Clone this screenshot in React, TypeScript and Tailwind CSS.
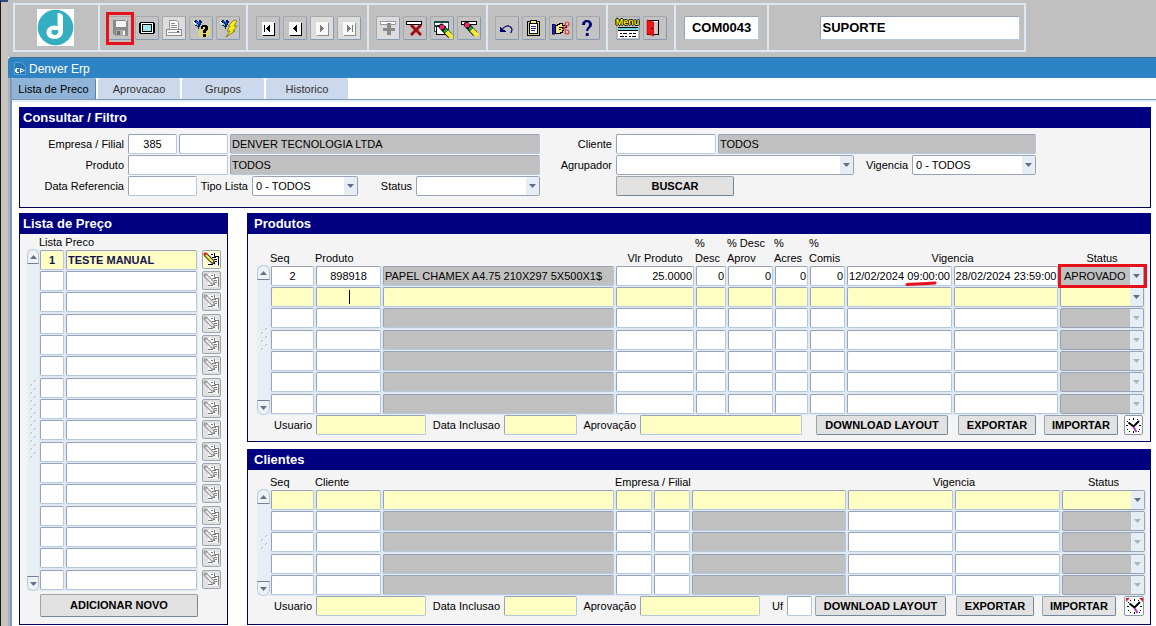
import { useState } from 'react';
import type { ReactNode } from 'react';
import clsx from 'clsx';

type Tone = 'white' | 'yellow' | 'gray';

const tones: Record<Tone, string> = {
  white: 'bg-white',
  yellow: 'bg-[#ffffc4]',
  gray: 'bg-[#c0c0c0]',
};

const fieldBorder =
  'border border-t-[#98a4b6] border-l-[#98a4b6] border-r-[#b4c8e0] border-b-[#b4c8e0] rounded-xs';

/* ---------- form controls ---------- */

function Field({
  id,
  label,
  value = '',
  tone = 'white',
  className = '',
}: {
  id?: string;
  label?: string;
  value?: string;
  tone?: Tone;
  className?: string;
}) {
  return (
    <input
      id={id}
      aria-label={label}
      defaultValue={value}
      readOnly={tone === 'gray'}
      className={clsx('block h-5 min-w-0 px-px outline-none', fieldBorder, tones[tone], className)}
    />
  );
}

function Arrow({ disabled = false }: { disabled?: boolean }) {
  return (
    <span className="pointer-events-none absolute inset-y-px right-px flex w-[13px] items-center justify-center bg-[#e6edf5]">
      <svg width="7" height="4" viewBox="0 0 7 4">
        <path d="M0 0h7L3.5 4z" fill={disabled ? '#a9b1bc' : '#5f6e86'} />
      </svg>
    </span>
  );
}

function Select({
  id,
  label,
  value = '',
  tone = 'white',
  disabled = false,
  className = '',
}: {
  id?: string;
  label?: string;
  value?: string;
  tone?: Tone;
  disabled?: boolean;
  className?: string;
}) {
  return (
    <div className={clsx('relative h-5 min-w-0', className)}>
      <select
        id={id}
        aria-label={label}
        disabled={disabled}
        defaultValue={value}
        className={clsx(
          'block h-full w-full appearance-none border border-[#98a4b6] rounded-xs pl-[3px] text-black opacity-100 outline-none',
          tones[tone],
        )}
      >
        <option value={value}>{value}</option>
      </select>
      <Arrow disabled={disabled} />
    </div>
  );
}

function Label({ htmlFor, className, children }: { htmlFor: string; className: string; children: ReactNode }) {
  return (
    <label htmlFor={htmlFor} className={clsx('shrink-0 pr-1 text-right whitespace-nowrap', className)}>
      {children}
    </label>
  );
}

function ActionButton({ className = '', children }: { className?: string; children: ReactNode }) {
  return (
    <button
      type="button"
      className={clsx(
        'shrink-0 rounded-xs border border-[#9aa5b0] border-r-[#71889c] border-b-[#71889c] bg-[#e1e1e1] font-bold whitespace-nowrap',
        className,
      )}
    >
      {children}
    </button>
  );
}

function Panel({ title, indent = 'pl-[3px]', children }: { title: string; indent?: string; children: ReactNode }) {
  return (
    <section className="border border-t-0 border-[#00005c] bg-[#f4f4f4]">
      <h2 className={clsx('-mx-px h-[21px] bg-[#000080] text-[13px] leading-[22px] font-bold text-white', indent)}>
        {title}
      </h2>
      {children}
    </section>
  );
}

/* ---------- record scroller ---------- */

function Scroller({ grips, className }: { grips: number; className: string }) {
  return (
    <div className={clsx('flex shrink-0 flex-col bg-[#e8eef5]', className)}>
      <button
        type="button"
        aria-label="Registro anterior"
        className="flex h-[15px] items-center justify-center rounded-t-full border border-[#b9c9dc] border-b-[#70809a] bg-[#eef2f7]"
      >
        <svg width="7" height="4" viewBox="0 0 7 4">
          <path d="M0 4h7L3.5 0z" fill="#6b6f86" />
        </svg>
      </button>
      <div className="flex flex-1 flex-col items-center justify-center">
        {Array.from({ length: grips }, (_, i) => (
          <svg key={i} width="8" height="8" viewBox="0 0 8 8">
            <path d="M5 2l2-2M1 6l2-2" stroke="#a5b1c2" />
            <path d="M6 3l2-2M2 7l2-2" stroke="#fff" />
          </svg>
        ))}
      </div>
      <button
        type="button"
        aria-label="Proximo registro"
        className="flex h-[15px] items-center justify-center rounded-b-full border border-[#b9c9dc] border-t-[#70809a] bg-[#eef2f7]"
      >
        <svg width="7" height="4" viewBox="0 0 7 4">
          <path d="M0 0h7L3.5 4z" fill="#6b6f86" />
        </svg>
      </button>
    </div>
  );
}

/* ---------- icons ---------- */

function Logo() {
  return (
    <svg width="37" height="37" viewBox="0 0 37 37" role="img" aria-label="Denver">
      <path fill="#fff" d="M0 0h37v37H0z" />
      <circle cx="18.5" cy="18.5" r="17.8" fill="#33afc1" />
      <path
        fill="#fff"
        d="M20.500 4c3 0 5.500 1.400 5.500 4v14.500c0 4.500-3.600 7.500-8.200 7.500S9.500 27.500 9.500 23.800c0-4.400 3.500-7.300 7.500-7.300 1.400 0 2.600.4 3.500 1z"
      />
      <path fill="#33afc1" d="M17.600 19.800c2.200 0 3.700 1.300 3.700 3s-1.500 3.200-3.700 3.200c-1.900 0-3.200-1.200-3.200-2.900 0-1.900 1.300-3.300 3.200-3.300z" />
      <path fill="#fff" d="M14.500 19.500l4-2.500 2.500 3.500-4 .7z" />
    </svg>
  );
}

function Pix({ children }: { children: ReactNode }) {
  return (
    <svg width="22" height="22" viewBox="0 0 22 22" shapeRendering="crispEdges" aria-hidden="true">
      {children}
    </svg>
  );
}

const SaveIcon = (
  <Pix>
    <path fill="#8a8a8a" d="M4 3h15v16H6l-2-2z" />
    <path fill="#f4f4f4" d="M7 4h10v6H7z" />
    <path fill="#a9a9a9" d="M7 13h9v6H7z" />
    <path fill="#6e6e6e" d="M8 14h3v4H8z" />
    <path fill="#fff" d="M17 3h1v1h-1zM14 14h2v4h-2z" />
  </Pix>
);

const ScreenIcon = (
  <Pix>
    <path d="M4 5h14v1h1v10h-1v1H4v-1H3V6h1z" />
    <path fill="#fff" d="M5 6h12v10H5z" />
    <path d="M6 7h10v8H6z" />
    <path fill="#8fe9ee" d="M7 8h8v6H7z" />
    <path fill="#fff" d="M7 8h1v1H7zM9 8h1v1H9zM11 8h1v1h-1zM8 10h1v1H8zM10 11h1v1h-1zM12 12h1v1h-1z" />
  </Pix>
);

const PrintIcon = (
  <Pix>
    <path fill="#fff" stroke="#999" d="M6.500 3.500h7l2 2v7h-9z" />
    <path stroke="#888" d="M8 6.500h4M8 8.500h6M8 10.500h6" />
    <path fill="#f7f7f7" stroke="#8d8d8d" d="M3.500 12.500h15v6h-15z" />
    <path stroke="#999" d="M5 15.500h12" />
    <path stroke="#555" d="M14 14.500h2" />
  </Pix>
);

function Torch() {
  return (
    <>
      <path fill="#10204a" d="M3 4h2V3h2v1h2V3h2v1h1v2h-1v2h-1v2H9v2H8v-2H7V9H5V7H4V6H3z" />
      <path fill="#fff" d="M3 4h1v1h1v1h1v2H5V7H4V6H3z" />
      <path fill="#1c41d6" d="M6 4h2v1h2v2H8V6H6z" />
      <path fill="#35d0e0" d="M6 6h1v1h1v2H7V8H6zM8 4h1v1H8z" />
    </>
  );
}

const FindIcon = (
  <Pix>
    <path fill="#e3dc5c" d="M11 9h9v9h-2v2H9v-7h2z" />
    <path fill="#c3c3c3" d="M12 17h1v1h-1zM18 15h1v1h-1zM10 15h1v1h-1zM18 9h1v1h-1zM16 18h1v1h-1zM10 18h1v1h-1zM19 12h1v1h-1z" />
    <Torch />
    <path d="M11 9h1V8h5v1h1v4h-1v1h-1v2h-3v-3h1v-1h1v-2h-2v2h-2zM13 17h3v3h-3z" />
  </Pix>
);

const RunIcon = (
  <Pix>
    <path
      fill="#f7ea16"
      stroke="#6e6400"
      strokeWidth="0.700"
      d="M17 3l3 1-3 5h3l-4 5h2l-9 6 4-6h-3l3-5h-2z"
      shapeRendering="auto"
    />
    <Torch />
  </Pix>
);

function NavIcon({ dir, bar = false, off = false }: { dir: 'prev' | 'next'; bar?: boolean; off?: boolean }) {
  const ink = off ? '#7d7d7d' : '#000';
  return (
    <Pix>
      <path fill={off ? '#8d8d8d' : '#000'} d="M6 6h12v13H6z" />
      <path fill="#f8f8f8" d="M5 5h12v13H5z" />
      {dir === 'prev' ? <path fill={ink} d="M9 11h1v-1h1V9h1V8h1v7h-1v-1h-1v-1h-1v-1H9z" /> : null}
      {dir === 'next' ? <path fill={ink} d="M9 8h1v1h1v1h1v1h1v1h-1v1h-1v1h-1v1H9z" /> : null}
      {bar && dir === 'prev' ? <path fill={ink} d="M7 8h1v7H7z" /> : null}
      {bar && dir === 'next' ? <path fill={ink} d="M14 8h1v7h-1z" /> : null}
    </Pix>
  );
}

const AddIcon = (
  <Pix>
    <path fill="#fff" stroke="#999" d="M3.500 4.500h15v3h-15z" />
    <path fill="#8a8a8a" d="M10 6h4v5h4v3h-4v4h-4v-4H6v-3h4z" />
  </Pix>
);

const RemoveIcon = (
  <Pix>
    <path fill="#fff" stroke="#000" d="M2.500 4.500h15v3h-15z" />
    <path stroke="#a01010" strokeWidth="3" d="M7 8l10 10M17 8L7 18" shapeRendering="auto" />
  </Pix>
);

function Eraser() {
  return (
    <g shapeRendering="auto">
      <path stroke="#000" strokeWidth="5.500" strokeLinecap="round" d="M8.500 7.500l8 8.500" />
      <path stroke="#f2ea30" strokeWidth="4.500" d="M13.500 12.500l6 6.500" />
      <path stroke="#1f9d45" strokeWidth="4" d="M11.500 10.500l2 2" />
      <circle cx="9" cy="8" r="2.500" fill="#e8286a" />
    </g>
  );
}

const ClearFormIcon = (
  <Pix>
    <path fill="#fff" stroke="#1a4b4b" d="M3.500 4.500h14v10h-14z" />
    <path fill="#1a4b4b" d="M3 4h15v2H3zM3 8h8v2H3z" />
    <path fill="#fff" stroke="#000" d="M5.500 9.500h9v8h-9z" />
    <g transform="translate(2 2)">
      <Eraser />
    </g>
  </Pix>
);

const ClearRowIcon = (
  <Pix>
    <path fill="#fff" stroke="#000" d="M3.500 4.500h15v3h-15z" />
    <Eraser />
  </Pix>
);

const UndoIcon = (
  <Pix>
    <path fill="none" stroke="#00006c" strokeWidth="1.200" d="M6 13c2-4 6-5 8.500-3 2 1.500 2 4 0 6" shapeRendering="auto" />
    <path fill="#00006c" d="M4 10h1v1h1v1h1v1h2v1h1v1H4z" />
  </Pix>
);

const ClipboardIcon = (
  <Pix>
    <path fill="#d3cd84" stroke="#000" d="M4.500 4.500h12v14h-12z" />
    <path fill="#fff" stroke="#000" d="M6.500 6.500h8v10h-8z" />
    <path fill="#f3ea6a" stroke="#000" d="M7.500 3.500h6v3h-6z" />
    <path stroke="#222c80" d="M8 9.500h5M8 11.500h5M8 13.500h4" />
  </Pix>
);

const CutIcon = (
  <Pix>
    <path fill="#1818c8" stroke="#000" strokeWidth="0.500" d="M2 7h3v10H2z" />
    <path fill="#f4eb74" stroke="#000" d="M5.500 8.500h2v-1h2v-1h3v2h4v2h-4v1h1v2h-1v2h-2v1h-5z" />
    <path stroke="#000" d="M9 10.500h3M9 12.500h2" />
    <g fill="none" stroke="#e23a3a" strokeWidth="1.200" shapeRendering="auto">
      <circle cx="17" cy="7" r="2" />
      <circle cx="17" cy="15" r="2" />
      <path d="M13 13l3-4M13 9l3 4" />
    </g>
  </Pix>
);

const HelpIcon = (
  <Pix>
    <path
      fill="#00007a"
      shapeRendering="auto"
      d="M5 8c0-3 2-5 5-5s5 1.800 5 4.500c0 3-3.500 3.800-3.800 6.500h-2c0-3.500 2.800-4 2.800-6.500C12 6 11 5 10 5S8 6 8 8zM8.800 16h2.800v3H8.800z"
    />
  </Pix>
);

const ExitIcon = (
  <Pix>
    <path fill="#fff" stroke="#000" d="M3.500 3.500h11v14h-11z" />
    <path fill="#c9c9c9" d="M11 5h3v12h-3z" />
    <path fill="#f01414" stroke="#8b0000" strokeWidth="0.500" d="M3 3l7 2v14l-7-2z" shapeRendering="auto" />
    <path d="M7 11h2v1H7z" />
  </Pix>
);

function MenuIcon() {
  return (
    <span className="flex shrink-0 flex-col items-center" aria-hidden="true">
      <span className="h-[10px] text-[9px] leading-[10px] font-bold text-[#fff200] [text-shadow:1px_0_#000,-1px_0_#000,0_1px_#000,0_-1px_#000]">
        Menu
      </span>
      <svg width="20" height="11" viewBox="0 0 20 11" shapeRendering="crispEdges" className="shrink-0">
        <path fill="#fff" d="M0 0h20v11H0z" />
        <path fill="#000" d="M0 0h20v1H0zM0 3h20v1H0z" />
        <path fill="#6fd3dc" d="M0 1h20v2H0z" />
        <path fill="#000" d="M2 6h2v1H2zM5 6h4v1H5zM11 6h3v1h-3zM15 6h3v1h-3zM2 9h4v1H2zM7 9h2v1H7zM11 9h2v1h-2zM14 9h4v1h-4z" />
      </svg>
    </span>
  );
}

function NoteIcon({ active }: { active: boolean }) {
  const ink = active ? '#000' : '#7b7b7b';
  return (
    <svg width="17" height="17" viewBox="0 0 17 17" className="shrink-0" aria-hidden="true">
      <path fill="#fff" d="M5 2h7l3 3v10H5z" />
      <path stroke={ink} fill="none" d="M11.500 2v3.500H15M15.500 5v9.500M8 3.500h2M9 6.500h4M11 8.500h3M12 10.500h2M5 13.500h5" />
      <path stroke={ink} strokeWidth="4" d="M2 3l8.500 8.500" />
      <path stroke={active ? '#f0e04a' : '#e6e6e6'} strokeWidth="2.500" d="M2 3l8 8" />
      <path stroke={active ? '#e02020' : '#a0a0a0'} strokeWidth="3" d="M1 2l2 2" />
      <path fill={ink} d="M12.500 13.500l-3-1 2-2z" />
    </svg>
  );
}

function ClockButton({ marked = false, className }: { marked?: boolean; className: string }) {
  return (
    <button
      type="button"
      aria-label="Historico de alteracoes"
      className={clsx('flex h-5 shrink-0 items-center justify-center rounded-xs border border-[#8a97a6] bg-white', className)}
    >
      <svg width="17" height="17" viewBox="0 0 17 17" className="shrink-0" aria-hidden="true">
        {marked && <path fill="#c8202c" d="M0 0h4L0 4zM17 0h-4l4 4z" />}
        <path
          fill="#000"
          shapeRendering="crispEdges"
          d="M8 1h1v2H8zM8 14h1v2H8zM1 8h2v1H1zM14 8h2v1h-2zM4 2h1v1H4zM12 2h1v1h-1zM2 4h1v1H2zM2 12h1v1H2zM14 12h1v1h-1zM4 14h1v1H4zM13 14h1v1h-1z"
        />
        <path fill="none" stroke="#000" strokeWidth="2" d="M3.500 5.500L8.500 9.500 14 4" />
        <path stroke="#b03ac0" strokeWidth="2" d="M8.500 10l3 5" />
      </svg>
    </button>
  );
}

/* ---------- toolbar ---------- */

function Tool({
  label,
  off = false,
  highlight = false,
  children,
}: {
  label: string;
  off?: boolean;
  highlight?: boolean;
  children: ReactNode;
}) {
  return (
    <button
      type="button"
      aria-label={label}
      className={clsx(
        'relative flex size-6 items-center justify-center rounded-xs border border-t-[#a8a8a8] border-l-[#a8a8a8] border-r-[#8399b4] border-b-[#8399b4]',
        off ? 'bg-[#dcdcdc]' : 'bg-[#c3c3c3]',
      )}
    >
      {children}
      {highlight && <span className="absolute -inset-x-[3px] -top-[5px] -bottom-[6px] border-3 border-[#e8101a]" />}
    </button>
  );
}

function ToolGroup({ className, children }: { className: string; children: ReactNode }) {
  return (
    <div className={clsx('flex items-center justify-center gap-[3px] border-r-2 border-[#dde6f3]', className)}>
      {children}
    </div>
  );
}

function Toolbar() {
  return (
    <header className="h-[57px] bg-[#c0c0c0] pt-[3px] pl-[5px]">
      <div className="flex h-[49px] w-fit border-2 border-r-0 border-[#dde6f3]">
        <ToolGroup className="w-[85px] pr-0.5">
          <Logo />
        </ToolGroup>
        <ToolGroup className="w-[148px] pl-0.5">
          <Tool label="Salvar" highlight>{SaveIcon}</Tool>
          <Tool label="Tela">{ScreenIcon}</Tool>
          <Tool label="Imprimir" off>{PrintIcon}</Tool>
          <Tool label="Entrar consulta">{FindIcon}</Tool>
          <Tool label="Executar consulta">{RunIcon}</Tool>
        </ToolGroup>
        <ToolGroup className="w-[121px] pl-0.5">
          <Tool label="Primeiro"><NavIcon dir="prev" bar /></Tool>
          <Tool label="Anterior"><NavIcon dir="prev" /></Tool>
          <Tool label="Proximo" off><NavIcon dir="next" off /></Tool>
          <Tool label="Ultimo" off><NavIcon dir="next" bar off /></Tool>
        </ToolGroup>
        <ToolGroup className="w-[119px] pl-0.5">
          <Tool label="Inserir" off>{AddIcon}</Tool>
          <Tool label="Excluir">{RemoveIcon}</Tool>
          <Tool label="Limpar tela">{ClearFormIcon}</Tool>
          <Tool label="Limpar registro">{ClearRowIcon}</Tool>
        </ToolGroup>
        <ToolGroup className="w-[120px]">
          <Tool label="Desfazer">{UndoIcon}</Tool>
          <Tool label="Colar">{ClipboardIcon}</Tool>
          <Tool label="Recortar">{CutIcon}</Tool>
          <Tool label="Ajuda">{HelpIcon}</Tool>
        </ToolGroup>
        <ToolGroup className="w-[68px]">
          <Tool label="Menu"><MenuIcon /></Tool>
          <Tool label="Sair">{ExitIcon}</Tool>
        </ToolGroup>
        <ToolGroup className="w-[93px]">
          <input
            aria-label="Codigo do programa"
            defaultValue="COM0043"
            className={clsx('h-6 w-[75px] bg-white text-center text-[13px] font-bold outline-none', fieldBorder)}
          />
        </ToolGroup>
        <ToolGroup className="w-[257px] pl-[46px]">
          <input
            aria-label="Usuario logado"
            defaultValue="SUPORTE"
            className={clsx('h-6 w-[200px] bg-white px-0.5 text-[13px] font-bold outline-none', fieldBorder)}
          />
        </ToolGroup>
      </div>
    </header>
  );
}

/* ---------- tabs ---------- */

const tabs = ['Lista de Preco', 'Aprovacao', 'Grupos', 'Historico'];

function Tabs() {
  const [current, setCurrent] = useState(tabs[0]);
  return (
    <nav className="border-b-2 border-[#e3eefb] bg-white">
      <div role="tablist" className="flex h-[22px] gap-0.5 border-b border-[#7d97b5]">
        {tabs.map((tab) => (
          <button
            key={tab}
            type="button"
            role="tab"
            aria-selected={tab === current}
            onClick={() => setCurrent(tab)}
            className={clsx(
              'rounded-t-xs leading-4',
              tab === current ? 'w-[84px] border-r border-[#5f83a8] bg-[#8fb4d7]' : 'w-[82px] bg-[#ccd8eb] text-[#333]',
            )}
          >
            {tab}
          </button>
        ))}
      </div>
    </nav>
  );
}

/* ---------- filter ---------- */

function FilterPanel() {
  return (
    <Panel title="Consultar / Filtro" indent="pl-1">
      <form className="grid grid-cols-[520fr_496fr] pt-[6px] pr-[114px] pb-[11px]" onSubmit={(e) => e.preventDefault()}>
        <div className="flex flex-col gap-px">
          <div className="flex items-center">
            <Label htmlFor="empresa" className="w-[108px]">Empresa / Filial</Label>
            <Field id="empresa" value="385" className="mr-0.5 w-[49px] text-center" />
            <Field label="Filial" className="mr-0.5 w-[49px]" />
            <Field label="Nome da empresa" value="DENVER TECNOLOGIA LTDA" tone="gray" className="flex-1" />
          </div>
          <div className="flex items-center">
            <Label htmlFor="produto" className="w-[108px]">Produto</Label>
            <Field id="produto" className="mr-0.5 w-[100px]" />
            <Field label="Nome do produto" value="TODOS" tone="gray" className="flex-1" />
          </div>
          <div className="flex items-center">
            <Label htmlFor="data-ref" className="w-[108px]">Data Referencia</Label>
            <Field id="data-ref" className="w-[69px]" />
            <Label htmlFor="tipo-lista" className="w-[55px]">Tipo Lista</Label>
            <Select id="tipo-lista" value="0 - TODOS" className="w-[106px]" />
            <Label htmlFor="status" className="w-[58px]">Status</Label>
            <Select id="status" className="flex-1" />
          </div>
        </div>
        <div className="flex flex-col gap-px">
          <div className="flex items-center">
            <Label htmlFor="cliente" className="w-[76px]">Cliente</Label>
            <Field id="cliente" className="mr-0.5 w-[100px]" />
            <Field label="Nome do cliente" value="TODOS" tone="gray" className="flex-1" />
          </div>
          <div className="flex items-center">
            <Label htmlFor="agrupador" className="w-[76px]">Agrupador</Label>
            <Select id="agrupador" className="flex-1" />
            <Label htmlFor="vigencia" className="w-[58px]">Vigencia</Label>
            <Select id="vigencia" value="0 - TODOS" className="w-[124px]" />
          </div>
          <div className="flex pl-[76px]">
            <ActionButton className="h-5 w-[118px]">BUSCAR</ActionButton>
          </div>
        </div>
      </form>
    </Panel>
  );
}

/* ---------- price lists ---------- */

const priceLists = [{ id: '1', name: 'TESTE MANUAL' }, ...Array.from({ length: 15 }, () => ({ id: '', name: '' }))];

const rowClass = 'h-[21px] nth-[3n]:h-[22px]';
const cellClass = 'bg-[#dfe8f3] p-0 px-px align-top';

function PriceListPanel() {
  return (
    <Panel title="Lista de Preço" indent="pl-1">
      <div className="flex pr-[5px] pl-[7px]">
        <Scroller grips={10} className="mt-[15px] w-3" />
        <table className="w-full table-fixed border-separate border-spacing-0">
          <colgroup>
            <col className="w-[26px]" />
            <col />
            <col className="w-[24px]" />
          </colgroup>
          <thead>
            <tr className="h-4">
              <th colSpan={3} className="p-0 text-left leading-4 font-normal">Lista Preco</th>
            </tr>
          </thead>
          <tbody>
            {priceLists.map((list, i) => {
              const active = i === 0;
              return (
                <tr key={i} className={rowClass}>
                  <td className={cellClass}>
                    <Field
                      label={`Codigo ${i + 1}`}
                      value={list.id}
                      tone={active ? 'yellow' : 'white'}
                      className="w-full text-center font-bold text-[#14144a]"
                    />
                  </td>
                  <td className={cellClass}>
                    <Field
                      label={`Lista ${i + 1}`}
                      value={list.name}
                      tone={active ? 'yellow' : 'white'}
                      className="w-full font-bold text-[#14144a]"
                    />
                  </td>
                  <td className="p-0 pl-1 align-top">
                    <button
                      type="button"
                      aria-label={`Editar lista ${i + 1}`}
                      className={clsx(
                        'flex size-[19px] items-center justify-center rounded-xs border border-[#9aa6b4]',
                        active ? 'bg-[#ffffd0]' : 'bg-[#e1e1e1]',
                      )}
                    >
                      <NoteIcon active={active} />
                    </button>
                  </td>
                </tr>
              );
            })}
          </tbody>
        </table>
      </div>
      <div className="flex pt-[3px] pr-[29px] pb-[7px] pl-5">
        <ActionButton className="h-[23px] flex-1">ADICIONAR NOVO</ActionButton>
      </div>
    </Panel>
  );
}

/* ---------- products ---------- */

const product = [
  '2',
  '898918',
  'PAPEL CHAMEX A4.75 210X297 5X500X1$',
  '25.0000',
  '0',
  '0',
  '0',
  '0',
  '12/02/2024 09:00:00',
  '28/02/2024 23:59:00',
];

const productRows: string[][] = [product, ...Array.from({ length: 6 }, () => product.map(() => ''))];

const productFields = [
  'Seq',
  'Produto',
  'Descricao',
  'Vlr Produto',
  '% Desc',
  '% Desc Aprov',
  '% Acres',
  '% Comis',
  'Vigencia inicial',
  'Vigencia final',
];

const thClass = 'p-0 font-normal whitespace-nowrap align-bottom leading-[15px]';

function ProductsPanel() {
  return (
    <Panel title="Produtos" indent="pl-[7px]">
      <div className="flex pr-[5px] pl-[9px]">
        <Scroller grips={3} className="mt-[31px] w-[13px]" />
        <table className="w-full table-fixed border-separate border-spacing-0">
          <colgroup>
            <col className="w-[45px]" />
            <col className="w-[67px]" />
            <col />
            <col className="w-[80px]" />
            <col className="w-[32px]" />
            <col className="w-[47px]" />
            <col className="w-[35px]" />
            <col className="w-[37px]" />
            <col className="w-[107px]" />
            <col className="w-[106px]" />
            <col className="w-[86px]" />
          </colgroup>
          <thead>
            <tr className="h-8">
              <th className={clsx(thClass, 'text-left')}>Seq</th>
              <th colSpan={2} className={clsx(thClass, 'text-left')}>Produto</th>
              <th className={thClass}>Vlr Produto</th>
              <th className={clsx(thClass, 'text-left')}>%<br />Desc</th>
              <th className={clsx(thClass, 'text-left')}>% Desc<br />Aprov</th>
              <th className={clsx(thClass, 'text-left')}>%<br />Acres</th>
              <th className={clsx(thClass, 'text-left')}>%<br />Comis</th>
              <th colSpan={2} className={thClass}>Vigencia</th>
              <th className={thClass}>Status</th>
            </tr>
          </thead>
          <tbody>
            {productRows.map((row, r) => {
              const current = r === 1;
              return (
                <tr key={r} className={rowClass}>
                  {row.map((value, c) => {
                    const tone: Tone = current ? 'yellow' : c === 2 ? 'gray' : 'white';
                    return (
                      <td key={c} className={clsx(cellClass, 'relative')}>
                        <Field
                          label={`${productFields[c]} ${r + 1}`}
                          value={value}
                          tone={tone}
                          className={clsx(
                            'w-full',
                            c < 2 && 'text-center',
                            c > 2 && c < 8 && 'text-right',
                            c >= 8 && 'px-0! text-center',
                          )}
                        />
                        {current && c === 1 && <span className="absolute top-[3px] left-1/2 h-[14px] w-px bg-black" />}
                        {r === 0 && c === 8 && (
                          <svg className="absolute top-[15px] left-[59px]" width="32" height="5" viewBox="0 0 32 5">
                            <path d="M2 3.500C10 3 20 3 30 2" fill="none" stroke="#e8101a" strokeWidth="3" strokeLinecap="round" />
                          </svg>
                        )}
                      </td>
                    );
                  })}
                  <td className={clsx(cellClass, 'relative')}>
                    <Select
                      label={`Status ${r + 1}`}
                      value={r === 0 ? 'APROVADO' : ''}
                      tone={current ? 'yellow' : 'gray'}
                      disabled={r > 1}
                    />
                    {r === 0 && (
                      <span className="pointer-events-none absolute -right-0.5 -bottom-px -left-px -top-0.5 z-10 border-3 border-[#e8101a]" />
                    )}
                  </td>
                </tr>
              );
            })}
          </tbody>
        </table>
      </div>
      <div className="flex items-center pr-[7px] pb-[6px]">
        <Label htmlFor="prod-usuario" className="w-[68px]">Usuario</Label>
        <Field id="prod-usuario" tone="yellow" className="w-[110px]" />
        <Label htmlFor="prod-inclusao" className="w-[78px]">Data Inclusao</Label>
        <Field id="prod-inclusao" tone="yellow" className="w-[73px]" />
        <Label htmlFor="prod-aprovacao" className="w-[63px]">Aprovação</Label>
        <Field id="prod-aprovacao" tone="yellow" className="flex-1" />
        <ActionButton className="ml-[14px] h-5 w-[132px]">DOWNLOAD LAYOUT</ActionButton>
        <ActionButton className="ml-2.5 h-5 w-[78px]">EXPORTAR</ActionButton>
        <ActionButton className="ml-2 h-5 w-[74px]">IMPORTAR</ActionButton>
        <ClockButton className="ml-[6px] w-[19px]" />
      </div>
    </Panel>
  );
}

/* ---------- clients ---------- */

const clientFields = ['Seq', 'Cliente', 'Nome', 'Empresa', 'Filial', 'Nome da empresa', 'Vigencia inicial', 'Vigencia final'];

function ClientsPanel() {
  return (
    <Panel title="Clientes" indent="pl-[7px]">
      <div className="flex pr-1 pl-[9px]">
        <Scroller grips={2} className="mt-[19px] w-[13px]" />
        <table className="w-full table-fixed border-separate border-spacing-0">
          <colgroup>
            <col className="w-[45px]" />
            <col className="w-[67px]" />
            <col />
            <col className="w-[38px]" />
            <col className="w-[38px]" />
            <col className="w-[156px]" />
            <col className="w-[107px]" />
            <col className="w-[107px]" />
            <col className="w-[85px]" />
          </colgroup>
          <thead>
            <tr className="h-5">
              <th className={clsx(thClass, 'text-left')}>Seq</th>
              <th colSpan={2} className={clsx(thClass, 'text-left')}>Cliente</th>
              <th colSpan={3} className={clsx(thClass, 'text-left')}>Empresa / Filial</th>
              <th colSpan={2} className={thClass}>Vigencia</th>
              <th className={thClass}>Status</th>
            </tr>
          </thead>
          <tbody>
            {[0, 1, 2, 3, 4].map((r) => (
              <tr key={r} className={rowClass}>
                {clientFields.map((name, c) => (
                  <td key={name} className={cellClass}>
                    <Field
                      label={`${name} ${r + 1}`}
                      tone={r === 0 ? 'yellow' : c === 2 || c === 5 ? 'gray' : 'white'}
                      className="w-full"
                    />
                  </td>
                ))}
                <td className={cellClass}>
                  <Select label={`Status cliente ${r + 1}`} tone={r === 0 ? 'yellow' : 'gray'} disabled={r > 0} />
                </td>
              </tr>
            ))}
          </tbody>
        </table>
      </div>
      <div className="flex items-center pr-[6px] pb-2">
        <Label htmlFor="cli-usuario" className="w-[68px]">Usuario</Label>
        <Field id="cli-usuario" tone="yellow" className="w-[110px]" />
        <Label htmlFor="cli-inclusao" className="w-[78px]">Data Inclusao</Label>
        <Field id="cli-inclusao" tone="yellow" className="w-[73px]" />
        <Label htmlFor="cli-aprovacao" className="w-[63px]">Aprovação</Label>
        <Field id="cli-aprovacao" tone="yellow" className="flex-1" />
        <Label htmlFor="cli-uf" className="w-[27px]">Uf</Label>
        <Field id="cli-uf" className="w-[25px]" />
        <ActionButton className="ml-[3px] h-5 w-[131px]">DOWNLOAD LAYOUT</ActionButton>
        <ActionButton className="ml-2.5 h-5 w-[78px]">EXPORTAR</ActionButton>
        <ActionButton className="ml-2 h-5 w-[74px]">IMPORTAR</ActionButton>
        <ClockButton marked className="ml-2 w-5" />
      </div>
    </Panel>
  );
}

export default function App() {
  return (
    <div className="flex min-h-screen bg-white font-['Liberation_Sans',Arial,sans-serif] text-[11px] text-black">
      <div className="w-2 shrink-0 border-t-2 border-l border-t-[#2b4a86] border-l-[#1c1c1c] bg-[#c8c4c0]" />
      <div className="flex min-w-0 flex-1 flex-col">
        <Toolbar />
        <div className="flex h-[21px] items-center gap-[3px] rounded-tl-sm border-t border-[#3f6f96] bg-[#2d83c3] pl-[6px] text-xs text-white">
          <svg width="12" height="13" viewBox="0 0 12 13" aria-hidden="true">
            <path fill="#2a76b4" stroke="#5da3d8" d="M.5.500h7l4 4v8H.5z" />
            <path fill="#fff" d="M1 7h1V6h3v1H3v3h2v1H2v-1H1zM6 6l5 2.500L6 11z" />
            <path fill="#2d83c3" d="M7 8h2v1H7z" />
          </svg>
          <h1 className="pt-px">Denver Erp</h1>
        </div>
        <div className="flex flex-1 flex-col border-l-2 border-[#a9b2bf]">
          <main className="flex-1 border-l-2 border-[#7f98b8]">
            <Tabs />
            <div className="flex flex-col gap-[5px] pt-[5px] pr-[5px] pl-[7px]">
              <FilterPanel />
              <div className="flex items-start gap-[19px]">
                <div className="w-[209px] shrink-0">
                  <PriceListPanel />
                </div>
                <div className="flex min-w-0 flex-1 flex-col gap-[7px]">
                  <ProductsPanel />
                  <ClientsPanel />
                </div>
              </div>
            </div>
          </main>
        </div>
      </div>
    </div>
  );
}
